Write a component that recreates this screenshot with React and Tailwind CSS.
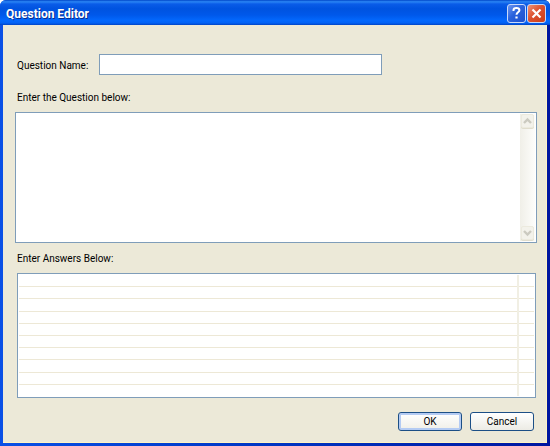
import { useState } from "react";

const ROW_COUNT = 10;

function TitleButton({ label, className, children }) {
  return (
    <button
      type="button"
      aria-label={label}
      className={`w-[19px] h-[19px] flex items-center justify-center rounded-[3px] border border-[#c9dafa] ${className}`}
    >
      <svg viewBox="0 0 17 17" className="w-[17px] h-[17px]" fill="none" stroke="#fff">
        {children}
      </svg>
    </button>
  );
}

function ScrollButton({ label, path }) {
  return (
    <button
      type="button"
      aria-label={label}
      className="w-[13px] h-[14px] flex items-center justify-center rounded-[2px] border border-[#eceade] bg-[#f3f2eb] shadow-[0_1px_0_#e0ddcd]"
    >
      <svg viewBox="0 0 9 8" className="w-[9px] h-2" fill="none" stroke="#cbcac0" strokeWidth="2.4">
        <path d={path} />
      </svg>
    </button>
  );
}

export default function App() {
  const [name, setName] = useState("");
  const [question, setQuestion] = useState("");
  const [answers, setAnswers] = useState(Array(ROW_COUNT).fill(""));

  const updateAnswer = (index, value) => {
    setAnswers((prev) => prev.map((a, i) => (i === index ? value : a)));
  };

  return (
    <div className="min-h-screen flex flex-col bg-white font-[Roboto,sans-serif] text-[10px] leading-[14px] text-black">
      <div className="flex-1 flex flex-col rounded-t-[6px] overflow-hidden bg-linear-to-r from-[#0a50e6] to-[#0016a0]">

        {/* Title Bar */}
        <header className="h-[25px] pl-[6px] pr-1 flex items-center justify-between bg-[linear-gradient(180deg,#0046c8_0%,#2a85f5_7%,#0a5ce8_16%,#0053e0_35%,#0058ea_60%,#0368fd_82%,#0262f5_92%,#0144c4_100%)]">
          <h1 className="pt-[3px] text-[12px] font-bold text-white [text-shadow:1px_1px_0_#0a2c8c]">
            Question Editor
          </h1>
          <div className="flex gap-px pt-[2px]">
            <TitleButton label="Help" className="bg-[linear-gradient(135deg,#6c96f0,#2a62dc_45%,#1c50cf)]">
              <path d="M5.500 6V5.200C5.500 3.800 6.600 3 8.400 3s3 .9 3 2.300c0 1.900-2.900 2.100-2.900 4.400" strokeWidth="2" />
              <path d="M7.400 12.500h2.200" strokeWidth="2.2" />
            </TitleButton>
            <TitleButton label="Close" className="bg-[linear-gradient(135deg,#ee9478,#dd5230_45%,#cc3d18)]">
              <path d="M4.500 4.500l8 8M12.500 4.500l-8 8" strokeWidth="2.2" />
            </TitleButton>
          </div>
        </header>

        {/* Dialog Body */}
        <form
          onSubmit={(e) => e.preventDefault()}
          className="flex-1 flex flex-col mx-[3px] mb-[3px] px-3 pt-[29px] pb-[11px] border-b border-r border-[#fff3c4] bg-[#ece9d8]"
        >
          <div className="flex items-center pl-[2px]">
            <label htmlFor="question-name" className="w-[82px] pt-[2px]">Question Name:</label>
            <input
              id="question-name"
              type="text"
              value={name}
              onChange={(e) => setName(e.target.value)}
              className="w-[283px] h-[21px] px-1 bg-white border border-[#7f9db9] outline-none"
            />
          </div>

          <label htmlFor="question" className="mt-4 mb-[7px] pl-[2px]">Enter the Question below:</label>
          <div className="h-[131px] mr-[-3px] flex bg-white border border-[#7f9db9]">
            <textarea
              id="question"
              value={question}
              onChange={(e) => setQuestion(e.target.value)}
              className="flex-1 p-1 resize-none outline-none"
            />
            <div className="w-[15px] my-px mr-px flex flex-col items-center justify-between pb-px bg-linear-to-r from-[#f0efe8] to-[#fdfdfb]">
              <ScrollButton label="Scroll up" path="M1 6l3.500-3.500L8 6" />
              <ScrollButton label="Scroll down" path="M1 2l3.500 3.500L8 2" />
            </div>
          </div>

          <h2 id="answers-label" className="mt-[9px] mb-[7px] pl-[2px]">Enter Answers Below:</h2>
          <div className="ml-[2px] p-px mr-[-2px] bg-white border border-[#7f9db9]">
            <table aria-labelledby="answers-label" className="w-full h-[121px] table-fixed border-collapse">
              <tbody>
                {answers.map((answer, i) => (
                  <tr key={i} className="border-b border-[#ede8d6] last:border-b-0">
                    <td className="p-0 border-r-2 border-r-[#f1efe4]">
                      <input
                        type="text"
                        aria-label={`Answer ${i + 1}`}
                        value={answer}
                        onChange={(e) => updateAnswer(i, e.target.value)}
                        className="block w-full h-[11px] px-1 outline-none"
                      />
                    </td>
                    <td className="w-4 p-0" />
                  </tr>
                ))}
              </tbody>
            </table>
          </div>

          <div className="mt-auto flex justify-end gap-2">
            <button
              type="submit"
              className="w-16 h-[19px] flex items-center justify-center rounded-[3px] border border-[#1c4f86] bg-linear-to-b from-white to-[#f0efe8] shadow-[inset_0_0_0_2px_#b4cbf3]"
            >
              OK
            </button>
            <button
              type="button"
              className="w-16 h-[19px] flex items-center justify-center rounded-[3px] border border-[#1c4f86] bg-linear-to-b from-white to-[#ecebe4]"
            >
              Cancel
            </button>
          </div>
        </form>
      </div>
    </div>
  );
}
